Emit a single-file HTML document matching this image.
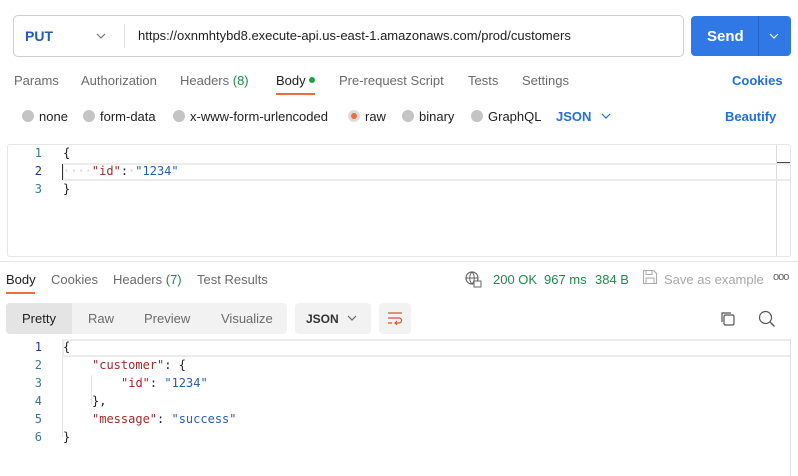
<!DOCTYPE html>
<html><head><meta charset="utf-8"><style>
*{box-sizing:border-box;margin:0;padding:0}
body{width:798px;height:476px;overflow:hidden;background:#fff;font-family:"Liberation Sans",sans-serif;font-size:13px;color:#212121;position:relative}
.a{position:absolute;white-space:nowrap}
.g{color:#6b6b6b}
.blue{color:#1f6fdc;font-weight:bold}
.mono{font-family:"DejaVu Sans Mono","Liberation Mono",monospace;font-size:12px}
.radio{position:absolute;width:12px;height:12px;border-radius:50%;background:#c4c4c4;top:110px}
.ln{position:absolute;width:20px;text-align:right;color:#3a7a94;font-weight:normal}
.k{color:#a12a2a}.s{color:#2a5db0}
</style></head><body>
<div class="a" style="left:13px;top:15px;width:671px;height:42px;border:1px solid #cfcfcf;border-radius:5px"></div>
<div class="a" style="left:25px;top:28px;color:#1f5bb8;font-weight:bold;font-size:14px">PUT</div>
<svg class="a" style="left:95px;top:32px" width="12" height="8"><path d="M2 2l4 4 4-4" fill="none" stroke="#777" stroke-width="1.2"/></svg>
<div class="a" style="left:124px;top:24px;width:1px;height:24px;background:#ddd"></div>
<div class="a" style="left:138px;top:28px;font-size:13px">https://oxnmhtybd8.execute-api.us-east-1.amazonaws.com/prod/customers</div>
<div class="a" style="left:691px;top:16px;width:100px;height:40px;background:#2f78e6;border-radius:4px"></div>
<div class="a" style="left:758px;top:16px;width:1px;height:40px;background:#2563c4"></div>
<div class="a" style="left:707px;top:28px;color:#fff;font-weight:bold;font-size:15px">Send</div>
<svg class="a" style="left:768px;top:32px" width="12" height="8"><path d="M2 2l4 4 4-4" fill="none" stroke="#fff" stroke-width="1.2"/></svg>
<div class="a g" style="left:14px;top:73px">Params</div>
<div class="a g" style="left:81px;top:73px">Authorization</div>
<div class="a g" style="left:180px;top:73px">Headers <span style="color:#1f8a4c">(8)</span></div>
<div class="a" style="left:276px;top:73px">Body</div>
<div class="a" style="left:309px;top:77px;width:6px;height:6px;border-radius:50%;background:#18a34a"></div>
<div class="a" style="left:276px;top:93px;width:39px;height:2px;background:#f26b3a"></div>
<div class="a g" style="left:339px;top:73px">Pre-request Script</div>
<div class="a g" style="left:468px;top:73px">Tests</div>
<div class="a g" style="left:522px;top:73px">Settings</div>
<div class="a blue" style="left:732px;top:73px">Cookies</div>
<div class="radio" style="left:22px"></div><div class="a" style="left:39px;top:109px">none</div>
<div class="radio" style="left:83px"></div><div class="a" style="left:100px;top:109px">form-data</div>
<div class="radio" style="left:173px"></div><div class="a" style="left:190px;top:109px">x-www-form-urlencoded</div>
<div class="radio" style="left:348px;background:#ddd"></div><div class="a" style="left:351px;top:113px;width:6px;height:6px;border-radius:50%;background:#f26b3a"></div>
<div class="a" style="left:365px;top:109px">raw</div>
<div class="radio" style="left:402px"></div><div class="a" style="left:419px;top:109px">binary</div>
<div class="radio" style="left:471px"></div><div class="a" style="left:488px;top:109px">GraphQL</div>
<div class="a blue" style="left:556px;top:109px">JSON</div>
<svg class="a" style="left:600px;top:112px" width="12" height="8"><path d="M2 2l4 4 4-4" fill="none" stroke="#1f6fdc" stroke-width="1.2"/></svg>
<div class="a blue" style="left:725px;top:109px">Beautify</div>
<div class="a" style="left:7px;top:144px;width:784px;height:113px;border:1px solid #e6e6e6;border-radius:3px"></div>
<div class="a" style="left:776px;top:145px;width:1px;height:111px;background:#ddd"></div>
<div class="a" style="left:777px;top:162px;width:13px;height:2px;background:#444"></div>
<div class="a" style="left:62px;top:163px;width:728px;height:18px;border:2px solid #ececec;border-right:none"></div>
<div class="a" style="left:62px;top:164px;width:1px;height:16px;background:#333"></div>
<div class="mono">
<div class="ln" style="left:22px;top:146px">1</div>
<div class="ln" style="left:22px;top:164px;color:#1b3a8a">2</div>
<div class="ln" style="left:22px;top:182px">3</div>
<div class="a" style="left:63px;top:146px">{</div>
<div class="a" style="left:63px;top:164px"><span style="color:#ccc">····</span><span class="k">"id"</span>:<span style="color:#ccc">·</span><span class="s">"1234"</span></div>
<div class="a" style="left:63px;top:182px">}</div>
</div>
<div class="a" style="left:0;top:261px;width:798px;height:1px;background:#e6e6e6"></div>
<div class="a" style="left:6px;top:272px">Body</div>
<div class="a" style="left:6px;top:292px;width:29px;height:2px;background:#f26b3a"></div>
<div class="a g" style="left:51px;top:272px">Cookies</div>
<div class="a g" style="left:113px;top:272px">Headers <span style="color:#1f8a4c">(7)</span></div>
<div class="a g" style="left:197px;top:272px">Test Results</div>
<svg class="a" style="left:464px;top:270px" width="18" height="18"><circle cx="8" cy="8" r="6" fill="none" stroke="#666" stroke-width="1.2"/><path d="M2 8h12M8 2c-3 3-3 9 0 12M8 2c3 3 3 9 0 12" fill="none" stroke="#666" stroke-width="1"/><rect x="10" y="11" width="7" height="6" fill="#fff" stroke="#666"/></svg>
<div class="a" style="left:493px;top:272px;color:#1f8a4c">200 OK</div>
<div class="a" style="left:544px;top:272px;color:#1f8a4c">967 ms</div>
<div class="a" style="left:595px;top:272px;color:#1f8a4c">384 B</div>
<svg class="a" style="left:642px;top:269px" width="16" height="16"><path d="M1.5 1.5h10l3 3v10h-13z" fill="none" stroke="#aaa" stroke-width="1.1"/><rect x="4" y="1.5" width="6" height="4" fill="none" stroke="#aaa"/><rect x="4" y="9" width="8" height="5.5" fill="none" stroke="#aaa"/></svg>
<div class="a" style="left:664px;top:272px;color:#a8a8a8">Save as example</div>
<div class="a" style="left:773px;top:271px;color:#666;font-size:11px;letter-spacing:-1px">ooo</div>
<div class="a" style="left:6px;top:303px;width:281px;height:31px;background:#f2f2f2;border-radius:4px"></div>
<div class="a" style="left:6px;top:303px;width:66px;height:31px;background:#e4e4e4;border-radius:4px 0 0 4px"></div>
<div class="a" style="left:22px;top:311px">Pretty</div>
<div class="a g" style="left:88px;top:311px">Raw</div>
<div class="a g" style="left:144px;top:311px">Preview</div>
<div class="a g" style="left:221px;top:311px">Visualize</div>
<div class="a" style="left:295px;top:303px;width:76px;height:31px;background:#f2f2f2;border-radius:4px"></div>
<div class="a" style="left:306px;top:312px;font-size:12px;font-weight:bold;color:#333">JSON</div>
<svg class="a" style="left:346px;top:314px" width="12" height="8"><path d="M2 2l4 4 4-4" fill="none" stroke="#666" stroke-width="1.2"/></svg>
<div class="a" style="left:379px;top:303px;width:32px;height:31px;background:#f2f2f2;border-radius:4px"></div>
<svg class="a" style="left:387px;top:311px" width="16" height="14"><path d="M1 2h14M1 7h11a2.5 2.5 0 0 1 0 5H8M1 12h4M10 10l-2 2 2 2" fill="none" stroke="#e0542b" stroke-width="1.2"/></svg>
<svg class="a" style="left:719px;top:310px" width="17" height="17"><rect x="5" y="5" width="10" height="10" rx="1.5" fill="none" stroke="#555" stroke-width="1.2"/><path d="M3 12V3h9" fill="none" stroke="#555" stroke-width="1.2"/></svg>
<svg class="a" style="left:758px;top:310px" width="18" height="18"><circle cx="7.5" cy="7.5" r="6" fill="none" stroke="#555" stroke-width="1.2"/><path d="M12 12l4.5 4.5" stroke="#555" stroke-width="1.3"/></svg>
<div class="a" style="left:62px;top:339px;width:728px;height:18px;border:2px solid #ececec;border-right:none"></div>
<div class="a" style="left:790px;top:339px;width:1px;height:137px;background:#ddd"></div>
<div class="a" style="left:62px;top:357px;width:1px;height:80px;background:#e2e2e2"></div>
<div class="a" style="left:91px;top:375px;width:1px;height:29px;background:#e2e2e2"></div>
<div class="mono">
<div class="ln" style="left:22px;top:340px;color:#1b3a8a">1</div>
<div class="ln" style="left:22px;top:358px">2</div>
<div class="ln" style="left:22px;top:376px">3</div>
<div class="ln" style="left:22px;top:394px">4</div>
<div class="ln" style="left:22px;top:412px">5</div>
<div class="ln" style="left:22px;top:430px">6</div>
<div class="a" style="left:63px;top:340px">{</div>
<div class="a" style="left:92px;top:358px"><span class="k">"customer"</span>: {</div>
<div class="a" style="left:121px;top:376px"><span class="k">"id"</span>: <span class="s">"1234"</span></div>
<div class="a" style="left:92px;top:394px">},</div>
<div class="a" style="left:92px;top:412px"><span class="k">"message"</span>: <span class="s">"success"</span></div>
<div class="a" style="left:63px;top:430px">}</div>
</div>
</body></html>
